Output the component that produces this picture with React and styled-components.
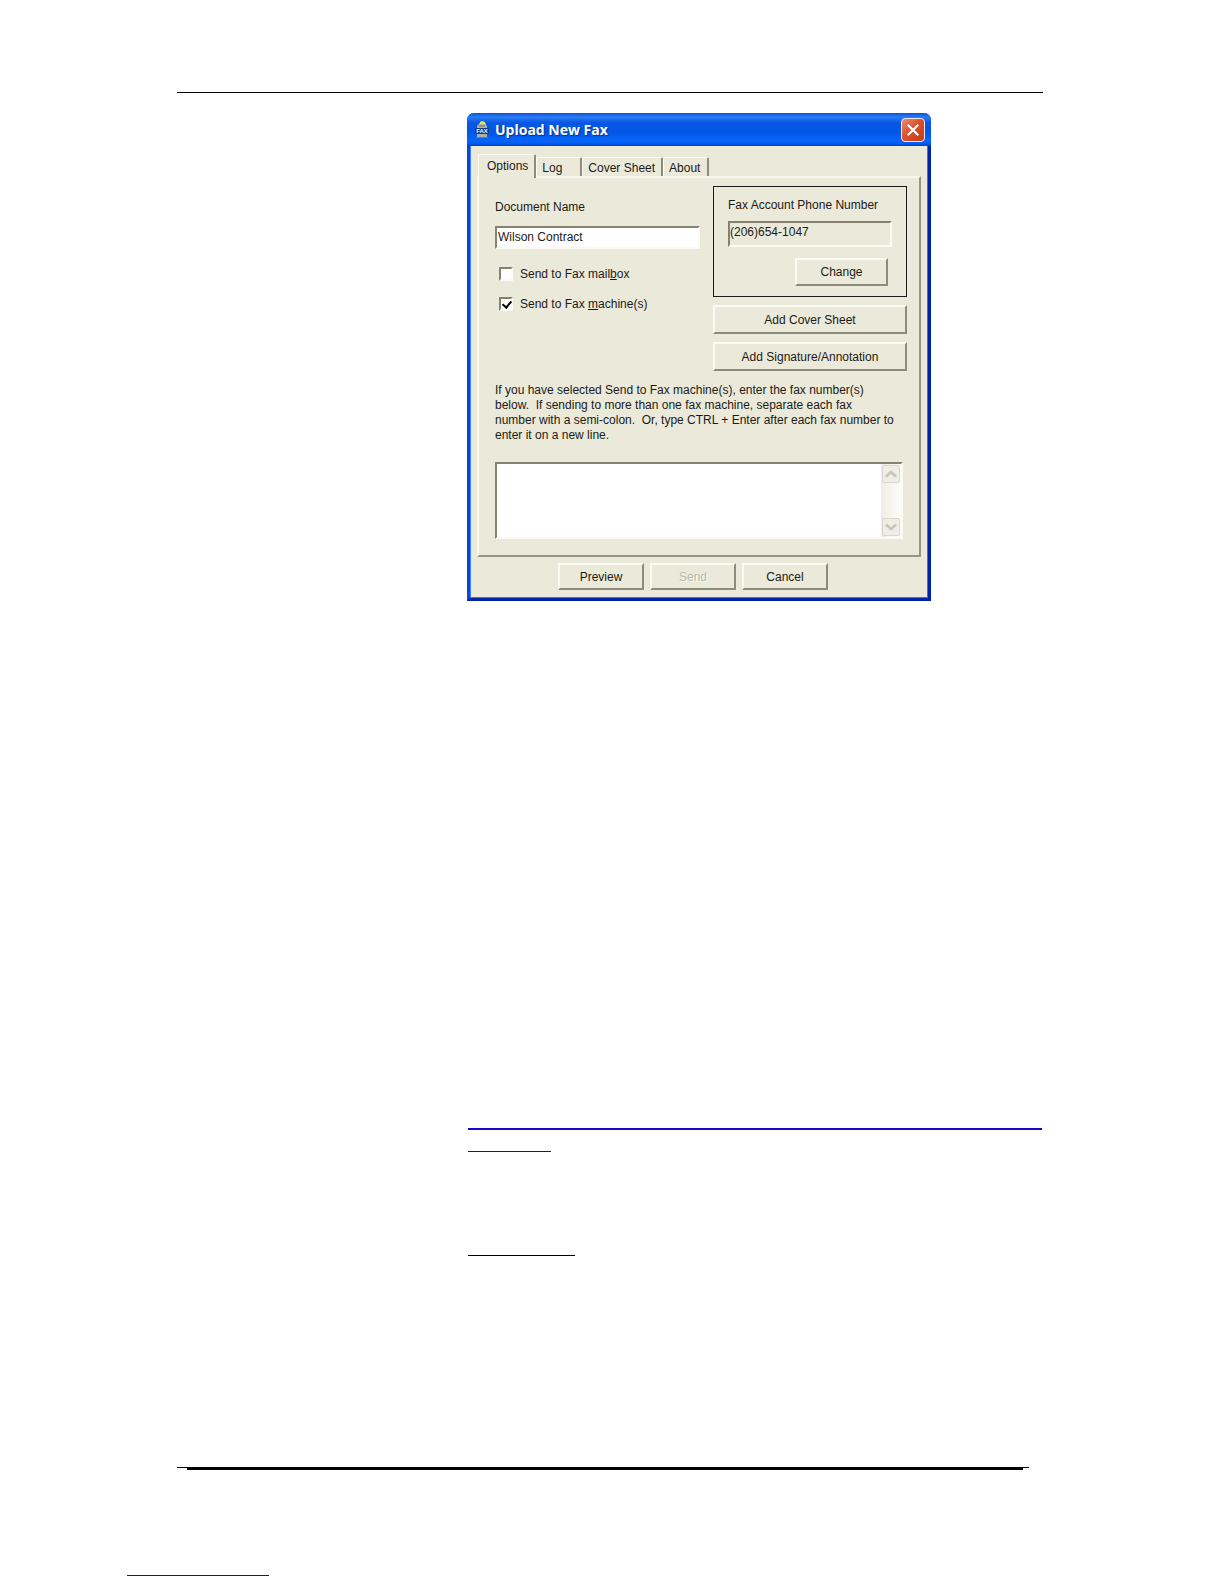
import React, { useState } from 'react'
import styled, { createGlobalStyle } from 'styled-components'

const tabs = ['Options', 'Log', 'Cover Sheet', 'About']

const FaxIcon = () => (
  <svg width="14" height="18" viewBox="0 0 14 18" aria-hidden="true">
    <path d="M4 4l1-3 2-1 3 1 1 3z" fill="#e3e65c" />
    <path d="M2 5l2-2h6l2 2v3H2z" fill="#b5b39a" />
    <path d="M4 5h6" stroke="#77755f" />
    <path d="M2 13h10v3H2z" fill="#b0aea0" />
    <path d="M1 16h12v1H1z" fill="#7d7a6c" />
    <rect x="0" y="7" width="14" height="6" rx="1" fill="#123c8c" />
    <text x="7" y="12" textAnchor="middle" fontFamily="Liberation Sans, sans-serif" fontWeight="700" fontSize="6" fill="#f2f6ff">FAX</text>
  </svg>
)

const CloseIcon = () => (
  <svg width="14" height="14" viewBox="0 0 14 14" aria-hidden="true">
    <path d="M2.5 2.5l9 9M11.5 2.5l-9 9" stroke="#fff" strokeWidth="2.2" strokeLinecap="square" />
  </svg>
)

const Chevron = ({ down }) => (
  <svg width="12" height="8" viewBox="0 0 12 8" aria-hidden="true">
    <path d={down ? 'M1 1.5l5 4.5 5-4.5' : 'M1 6.5l5-4.5 5 4.5'} stroke="#c6c5ba" strokeWidth="2.6" fill="none" />
  </svg>
)

const App = () => {
  const [tab, setTab] = useState('Options')
  const [name, setName] = useState('Wilson Contract')
  const [mailbox, setMailbox] = useState(false)
  const [machine, setMachine] = useState(true)
  const [numbers, setNumbers] = useState('')

  return (
    <Page>
      <GlobalStyle />
      <Content>
        <Rule />
        <Column>
          <Dialog aria-label="Upload New Fax">
            <TitleBar>
              <FaxIcon />
              <Title>Upload New Fax</Title>
              <CloseButton type="button" aria-label="Close"><CloseIcon /></CloseButton>
            </TitleBar>
            <DialogBody>
              <TabList role="tablist">
                {tabs.map((t) => (
                  <Tab
                    key={t}
                    type="button"
                    role="tab"
                    aria-selected={t === tab}
                    $active={t === tab}
                    onClick={() => setTab(t)}
                  >
                    {t}
                  </Tab>
                ))}
              </TabList>
              <Panel>
                <Columns>
                  <FormColumn>
                    <label htmlFor="docname">Document Name</label>
                    <TextInput id="docname" value={name} onChange={(e) => setName(e.target.value)} />
                    <CheckRow>
                      <Checkbox type="checkbox" checked={mailbox} onChange={() => setMailbox(!mailbox)} />
                      <span>Send to Fax mail<u>b</u>ox</span>
                    </CheckRow>
                    <CheckRow>
                      <Checkbox type="checkbox" checked={machine} onChange={() => setMachine(!machine)} />
                      <span>Send to Fax <u>m</u>achine(s)</span>
                    </CheckRow>
                  </FormColumn>
                  <AccountColumn>
                    <AccountBox>
                      <label htmlFor="account">Fax Account Phone Number</label>
                      <AccountInput id="account" value="(206)654-1047" readOnly />
                      <ChangeButton type="button">Change</ChangeButton>
                    </AccountBox>
                    <WideButton type="button">Add Cover Sheet</WideButton>
                    <WideButton type="button">Add Signature/Annotation</WideButton>
                  </AccountColumn>
                </Columns>
                <Help htmlFor="numbers">
                  {`If you have selected Send to Fax machine(s), enter the fax number(s)
below.  If sending to more than one fax machine, separate each fax
number with a semi-colon.  Or, type CTRL + Enter after each fax number to
enter it on a new line.`}
                </Help>
                <NumbersBox>
                  <NumbersInput id="numbers" value={numbers} onChange={(e) => setNumbers(e.target.value)} />
                  <ScrollTrack>
                    <ScrollButton type="button" disabled aria-label="Scroll up"><Chevron /></ScrollButton>
                    <ScrollButton type="button" disabled aria-label="Scroll down"><Chevron down /></ScrollButton>
                  </ScrollTrack>
                </NumbersBox>
              </Panel>
              <Actions>
                <ActionButton type="button">Preview</ActionButton>
                <ActionButton type="button" disabled>Send</ActionButton>
                <ActionButton type="button">Cancel</ActionButton>
              </Actions>
            </DialogBody>
          </Dialog>
          <TextRules>
            <Rule $color="#1408c8" $height={2} />
            <Rule $color="#18127e" $width={83} />
            <LastRule $width={107} />
          </TextRules>
        </Column>
        <FooterRules>
          <Rule />
          <Inset><Rule $height={2} /></Inset>
        </FooterRules>
      </Content>
      <Rule $color="#18127e" $width={142} />
    </Page>
  )
}

const GlobalStyle = createGlobalStyle`
  * {
    box-sizing: border-box;
  }
  body {
    margin: 0;
    background: #fff;
  }
  body, button, input, textarea {
    font-family: "Liberation Sans", Arial, sans-serif;
    font-size: 12px;
    line-height: 16px;
    color: #1c1b17;
  }
`

const Page = styled.main`
  padding: 92px 127px 8px;
`

const Content = styled.div`
  padding: 0 54px 105px 50px;
`

const Rule = styled.hr`
  width: ${(p) => (p.$width ? `${p.$width}px` : 'auto')};
  height: ${(p) => p.$height || 1}px;
  margin: 0;
  border: none;
  background: ${(p) => p.$color || '#000'};
`

const LastRule = styled(Rule)`
  margin-top: 82px;
`

const Column = styled.div`
  padding: 20px 0 211px 290px;
`

const TextRules = styled.div`
  display: flex;
  flex-direction: column;
  gap: 21px;
  padding: 527px 1px 0;
`

const FooterRules = styled.footer`
  padding-right: 14px;
`

const Inset = styled.div`
  padding: 0 6px 0 10px;
`

const Dialog = styled.section`
  max-width: 464px;
  border: 3px solid;
  border-color: #0a4be0 #0023a8 #0023a8 #0a46d8;
  border-top: none;
  border-radius: 7px 7px 0 0;
`

const TitleBar = styled.header`
  display: flex;
  align-items: center;
  gap: 6px;
  height: 33px;
  margin: 0 -3px;
  padding: 0 6px 0 8px;
  border-radius: 7px 7px 0 0;
  background: linear-gradient(#0a50d8, #2a7cf5 12%, #0757e4 30%, #0256e6 60%, #0565fc 82%, #0460f4 90%, #0144c8);
`

const Title = styled.h1`
  flex: 1;
  margin: 0;
  font: 700 14px/16px "Open Sans", "Noto Sans", sans-serif;
  color: #fff;
  text-shadow: 1px 1px 1px #0a2f8c;
`

const CloseButton = styled.button`
  display: flex;
  align-items: center;
  justify-content: center;
  width: 24px;
  height: 24px;
  padding: 0;
  border: 1px solid #f4e9f0;
  border-radius: 4px;
  background: linear-gradient(135deg, #ec8f72, #dd5130 45%, #c23a14);
`

const DialogBody = styled.div`
  padding: 8px 6px 7px;
  border: 1px solid;
  border-color: #ebe9d9 #3f70e4 #3f70e4 #3f80f0;
  border-top: none;
  background: #ebe9d9;
`

const TabList = styled.div`
  display: flex;
  align-items: flex-end;
  padding-left: 1px;
`

const Tab = styled.button`
  position: relative;
  z-index: ${(p) => (p.$active ? 1 : 0)};
  min-width: 46px;
  height: ${(p) => (p.$active ? 24 : 19)}px;
  margin-bottom: ${(p) => (p.$active ? -2 : 0)}px;
  padding: ${(p) => (p.$active ? '0 6px 2px 8px' : '2px 6px 0 5px')};
  border: solid;
  border-width: 1px 2px 0 1px;
  border-color: #fbfaf3 #8d8b7a #fbfaf3 #fbfaf3;
  border-radius: 2px 2px 0 0;
  background: #ebe9d9;
  text-align: left;
`

const Panel = styled.div`
  padding: 8px 12px 16px 16px;
  border: 2px solid;
  border-color: #f8f7ee #979585 #979585 #f8f7ee;
`

const Columns = styled.div`
  display: flex;
  justify-content: space-between;
  gap: 13px;
`

const FormColumn = styled.div`
  display: flex;
  flex-direction: column;
  flex: 1;
  gap: 14px;
  padding-top: 13px;
`

const AccountColumn = styled.div`
  display: flex;
  flex-direction: column;
  gap: 8px;
  width: 194px;
`

const TextInput = styled.input`
  width: 100%;
  height: 23px;
  margin: -3px 0 3px;
  padding: 0 1px 2px;
  border: 2px solid;
  border-color: #85836f #fbfaf3 #fbfaf3 #85836f;
  border-radius: 0;
  background: #fff;
`

const CheckRow = styled.label`
  display: flex;
  align-items: center;
  gap: 7px;
  padding-left: 4px;
`

const Checkbox = styled.input`
  appearance: none;
  width: 14px;
  height: 14px;
  margin: 0;
  border: 2px solid;
  border-color: #85836f #fbfaf3 #fbfaf3 #85836f;
  background: #fff;
  &:checked::after {
    content: "";
    display: block;
    width: 4px;
    height: 7px;
    margin: 0 0 0 3px;
    border: solid #000;
    border-width: 0 2px 2px 0;
    transform: rotate(40deg);
  }
`

const AccountBox = styled.div`
  display: flex;
  flex-direction: column;
  padding: 10px 14px;
  border: 1px solid #1c1b17;
`

const AccountInput = styled.input`
  width: 100%;
  height: 26px;
  margin: 8px 0 11px;
  padding: 0 0 5px;
  border: 2px solid;
  border-color: #85836f #fbfaf3 #fbfaf3 #85836f;
  border-radius: 0;
  background: #ebe9d9;
`

const Button = styled.button`
  padding: 0;
  border: 2px solid;
  border-color: #fbfaf3 #8d8b7a #8d8b7a #fbfaf3;
  background: #ebe9d9;
  &:disabled {
    color: #bab8a8;
    text-shadow: 1px 1px 0 #fbfaf3;
  }
`

const ChangeButton = styled(Button)`
  align-self: flex-end;
  width: 93px;
  height: 28px;
  margin-right: 4px;
`

const WideButton = styled(Button)`
  height: 29px;
`

const Help = styled.label`
  display: block;
  margin: 12px 0 19px;
  line-height: 15px;
  white-space: pre-wrap;
`

const NumbersBox = styled.div`
  display: flex;
  height: 77px;
  margin-right: 4px;
  border: 2px solid;
  border-color: #85836f #fbfaf3 #fbfaf3 #85836f;
  background: #fff;
`

const NumbersInput = styled.textarea`
  flex: 1;
  padding: 2px;
  border: none;
  outline: none;
  resize: none;
  background: transparent;
`

const ScrollTrack = styled.div`
  display: flex;
  flex-direction: column;
  justify-content: space-between;
  width: 20px;
  padding: 1px;
  background: linear-gradient(90deg, #eeede5, #fdfdfa);
`

const ScrollButton = styled.button`
  display: flex;
  align-items: center;
  justify-content: center;
  height: 18px;
  padding: 0;
  border: 1px solid #d9d8ce;
  border-radius: 2px;
  background: #efeee6;
`

const Actions = styled.div`
  display: flex;
  justify-content: center;
  gap: 6px;
  padding: 6px 12px 0 0;
`

const ActionButton = styled(Button)`
  width: 86px;
  height: 27px;
`

export default App
